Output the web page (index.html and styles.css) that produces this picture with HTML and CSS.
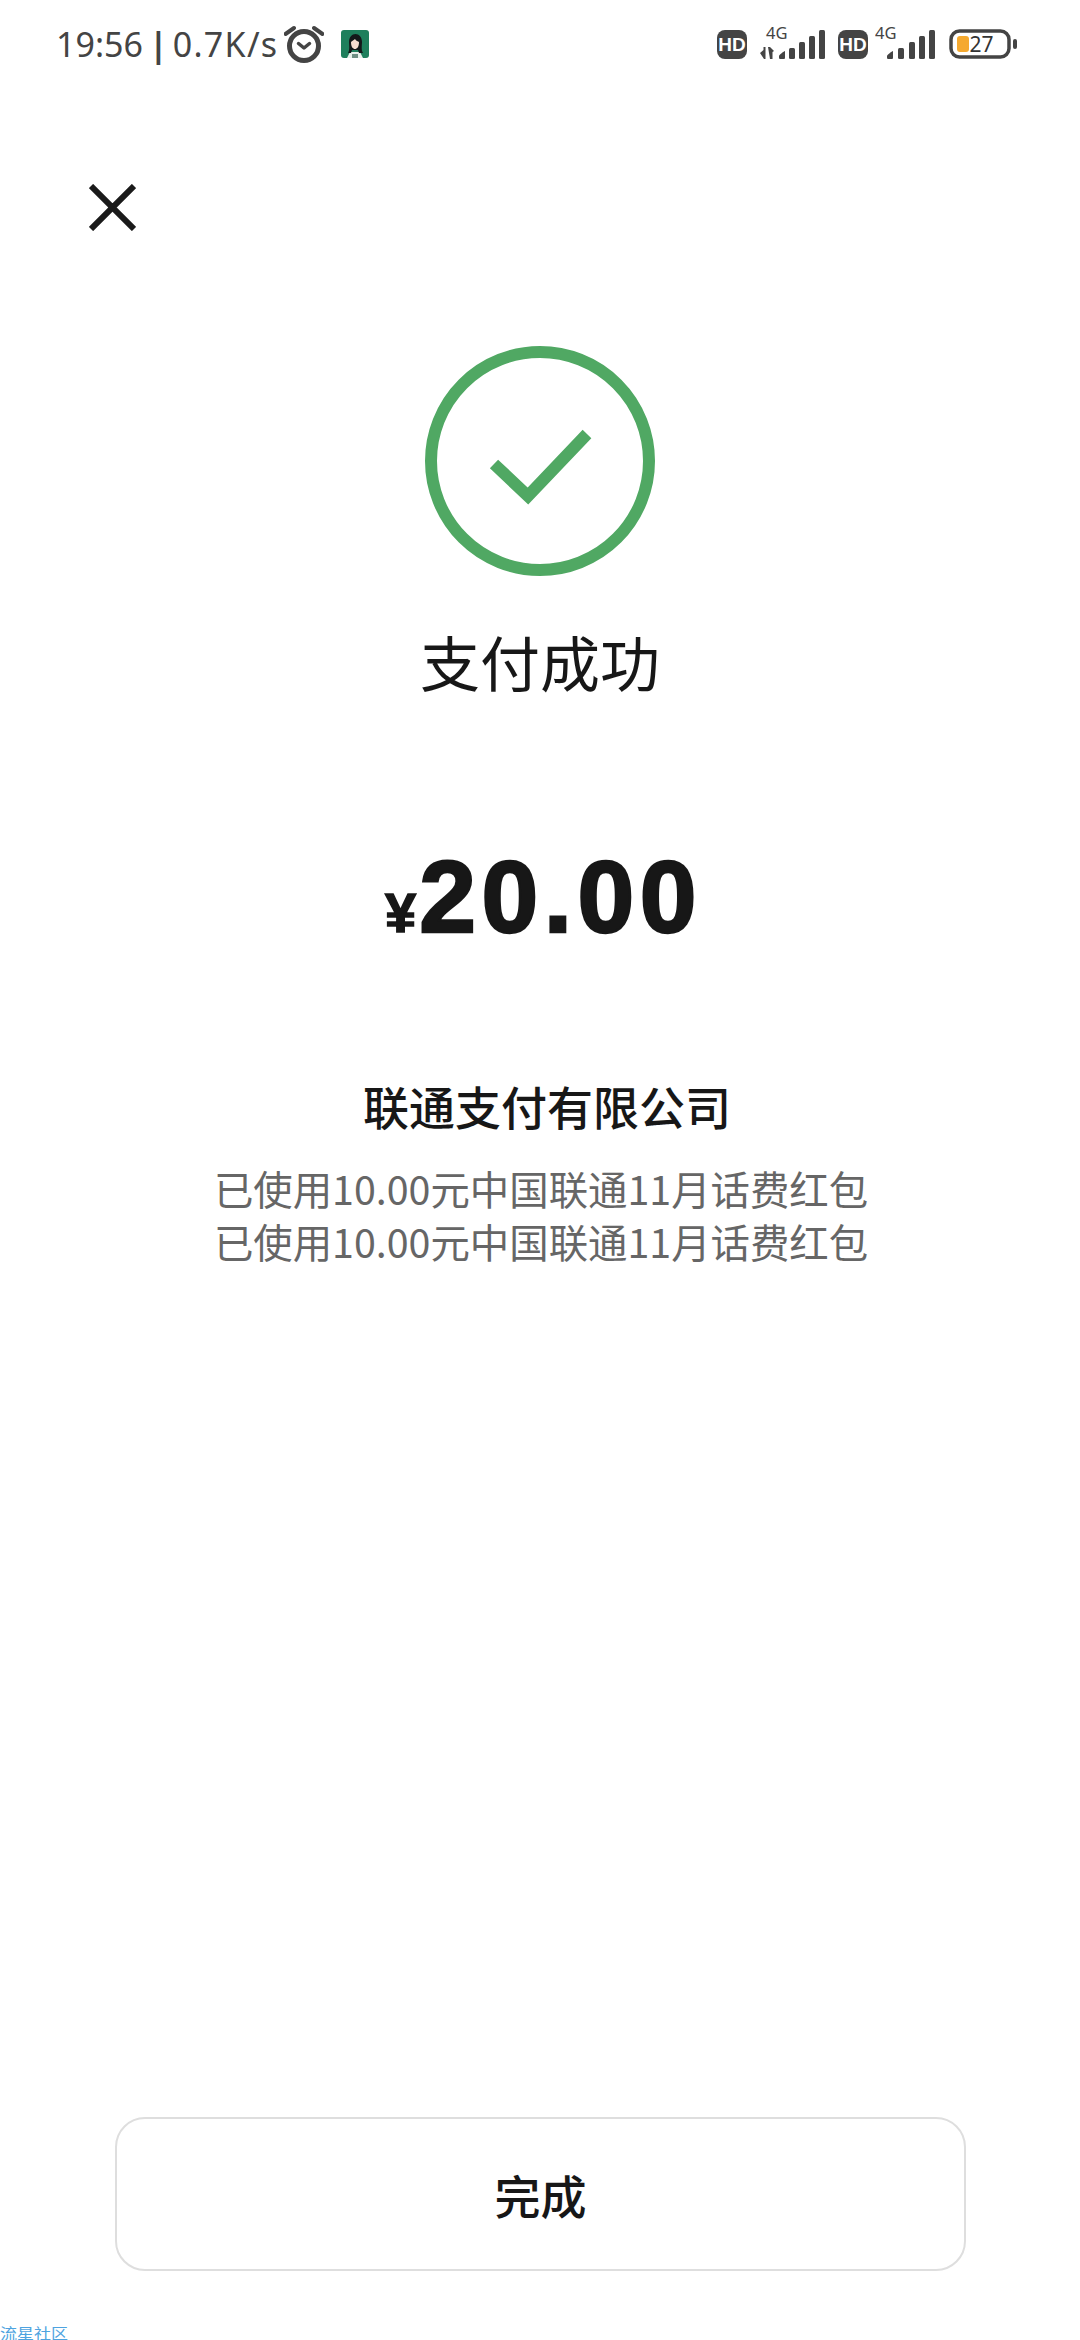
FILE: index.html
```html
<!DOCTYPE html>
<html lang="zh-CN">
<head>
<meta charset="utf-8">
<title>支付成功</title>
<link rel="stylesheet" href="styles.css">
</head>
<body>
<main class="page">
  <header class="status">
    <div class="status-left">
      <span class="clock">19:56</span>
      <span class="sep">|</span>
      <span class="speed">0.7K/s</span>
      <svg class="alarm" width="40" height="38" viewBox="0 0 40 38" fill="none" stroke="#444" stroke-linecap="round">
        <circle cx="20" cy="21" r="14.5" stroke-width="5"/>
        <path d="M14.5 18.500 20 23l5.500-4.500" stroke-width="3.500" stroke-linejoin="round"/>
        <path d="M1.500 9 10 3M30 3l8.500 6" stroke-width="4"/>
      </svg>
      <svg class="avatar" width="28" height="28" viewBox="0 0 28 28">
        <rect width="28" height="28" rx="3" fill="#1e7f5c"/>
        <path d="M6 28l3-6h10l3 6z" fill="#e8f0ea"/>
        <path d="M11 28v-4h6v4z" fill="#6f8f84"/>
        <path d="M7 23c2-3 1-8 1-11 0-5 3-8 6.500-8S21 7 21 12c0 3-1 8 1 11l-4 0-1-3h-6l-1 3z" fill="#14181a"/>
        <path d="M10 12c1-1 3-2 4-3 1 2 3 2 4 3 0 5-2 7-4 7s-4-2-4-7z" fill="#f6dccf"/>
      </svg>
    </div>
    <div class="status-right">
      <svg class="hd" width="30" height="29" viewBox="0 0 30 29">
        <rect width="30" height="29" rx="8" fill="#444"/>
        <text class="hd-text" x="15" y="21">HD</text>
      </svg>
      <svg class="signal-a" width="67" height="48" viewBox="0 0 67 48">
        <text class="net" x="6" y="19">4G</text>
        <path d="M0 33l3.500-3v-3h2v12h-1.500zM8 27h2l4 4-1.500 1v7h-2.500z" fill="#444"/>
        <path d="M19 36c0-1 5-5 6-5v6.500c0 1-.5 1.500-1.500 1.500h-3c-1 0-1.500-.5-1.500-1.500z" fill="#444"/>
        <rect x="29" y="28" width="6" height="11" rx="1.500" fill="#444"/>
        <rect x="39" y="22" width="6" height="17" rx="1.500" fill="#444"/>
        <rect x="49" y="16" width="6" height="23" rx="1.500" fill="#444"/>
        <rect x="59" y="10" width="6" height="29" rx="1.500" fill="#444"/>
      </svg>
      <svg class="hd" width="30" height="29" viewBox="0 0 30 29">
        <rect width="30" height="29" rx="8" fill="#444"/>
        <text class="hd-text" x="15" y="21">HD</text>
      </svg>
      <svg class="signal-b" width="60" height="48" viewBox="0 0 60 48">
        <text class="net" x="0" y="19">4G</text>
        <path d="M12 36c0-1 5-5 6-5v6.500c0 1-.5 1.500-1.500 1.500h-3c-1 0-1.500-.5-1.500-1.500z" fill="#444"/>
        <rect x="23" y="28" width="6" height="11" rx="1.500" fill="#444"/>
        <rect x="34" y="22" width="6" height="17" rx="1.500" fill="#444"/>
        <rect x="44" y="16" width="6" height="23" rx="1.500" fill="#444"/>
        <rect x="54" y="10" width="6" height="29" rx="1.500" fill="#444"/>
      </svg>
      <svg class="battery" width="68" height="30" viewBox="0 0 68 30">
        <rect x="2" y="2" width="58" height="26" rx="8.500" fill="#fff" stroke="#444" stroke-width="3.500"/>
        <rect x="8" y="7" width="12" height="16" rx="3" fill="#f5a92f"/>
        <text class="batt-text" x="20.500" y="23">27</text>
        <rect x="64" y="10" width="4" height="10" rx="2" fill="#444"/>
      </svg>
    </div>
  </header>

  <button class="close" type="button" aria-label="关闭">
    <svg width="47" height="47" viewBox="0 0 47 47" fill="none" stroke="#1a1a1a" stroke-width="6" stroke-linecap="butt">
      <path d="M2 2l43 43M45 2 2 45"/>
    </svg>
  </button>

  <section class="result">
    <svg class="tick" width="230" height="230" viewBox="0 0 230 230" fill="none" stroke="#50a863" stroke-width="12">
      <circle cx="115" cy="115" r="109"/>
      <path d="M69 118l34 32 59-62"/>
    </svg>
    <h1 class="title">支付成功</h1>
    <p class="amount"><span class="yen">¥</span><span class="value">20.00</span></p>
    <h2 class="merchant">联通支付有限公司</h2>
    <p class="note">已使用10.00元中国联通11月话费红包</p>
    <p class="note">已使用10.00元中国联通11月话费红包</p>
  </section>

  <div class="actions">
    <button class="done" type="button">完成</button>
  </div>

  <span class="watermark">流星社区</span>
</main>
</body>
</html>
```
FILE: styles.css
```css
* { box-sizing: border-box; }
html, body { margin: 0; padding: 0; background: #fff; }
.page {
  position: relative;
  width: 1080px;
  height: 2340px;
  overflow: hidden;
  display: flex;
  flex-direction: column;
  background: #fff;
  color: #171717;
  font-family: "Noto Sans CJK SC", "Noto Sans", sans-serif;
}
.status {
  height: 88px;
  padding: 0 63px 0 56px;
  display: flex;
  align-items: center;
  justify-content: space-between;
  flex: none;
}
.status-left { display: flex; align-items: center; }
.clock, .speed, .sep {
  font-family: "Noto Sans", sans-serif;
  font-size: 34px;
  line-height: 40px;
  color: #444;
  white-space: nowrap;
}
.sep { font-weight: 700; margin: 0 5px 0 6px; }
.speed { letter-spacing: 1.300px; }
.alarm { margin-left: 6px; margin-top: -1px; }
.avatar { margin-left: 17px; }
.status-right { display: flex; align-items: center; }
.hd-text {
  font-family: "Liberation Sans", sans-serif;
  font-weight: 700;
  font-size: 19px;
  fill: #fff;
  text-anchor: middle;
}
.net {
  font-family: "Noto Sans", sans-serif;
  font-size: 16.500px;
  fill: #444;
}
.signal-a { margin-left: 13px; }
.signal-a + .hd { margin-left: 11px; }
.signal-b { margin-left: 7px; }
.battery { margin-left: 14px; }
.batt-text {
  font-family: "Noto Sans", sans-serif;
  font-size: 21px;
  fill: #333;
}
.close {
  align-self: flex-start;
  margin: 96px 0 0 89px;
  padding: 0;
  width: 47px;
  height: 47px;
  border: 0;
  background: none;
  display: flex;
}
.result {
  display: flex;
  flex-direction: column;
  align-items: center;
  flex: 1;
}
.tick { margin-top: 115px; flex: none; }
.title {
  margin: 45px 0 0;
  font-size: 60px;
  line-height: 80px;
  font-weight: 400;
  color: #171717;
}
.amount {
  margin: 136px 0 0 7px;
  display: flex;
  align-items: baseline;
  height: 120px;
  line-height: 120px;
  font-family: "Liberation Sans", sans-serif;
  font-weight: 700;
  color: #171717;
  -webkit-text-stroke: 2.500px #171717;
}
.yen { font-size: 56px; margin-right: 3px; -webkit-text-stroke: 1.500px #171717; }
.value { font-size: 102px; letter-spacing: 5.500px; }
.merchant {
  margin: 118px 0 0 14px;
  font-size: 46px;
  line-height: 60px;
  font-weight: 500;
  color: #171717;
}
.note {
  margin: 0 0 0 2px;
  font-size: 39.400px;
  line-height: 53px;
  color: #666;
  white-space: nowrap;
}
.merchant + .note { margin-top: 26px; }
.actions {
  flex: none;
  padding: 0 114px 69px 115px;
}
.done {
  display: block;
  width: 100%;
  height: 154px;
  border: 2px solid #dedede;
  border-radius: 30px;
  background: #fff;
  color: #171717;
  font-family: inherit;
  font-size: 46px;
  font-weight: 500;
  padding: 0;
}
.watermark {
  position: absolute;
  left: 0;
  bottom: 0;
  font-size: 17px;
  line-height: 17px;
  color: #4ea3e0;
  transform: scaleY(.85);
  transform-origin: left bottom;
}
```
